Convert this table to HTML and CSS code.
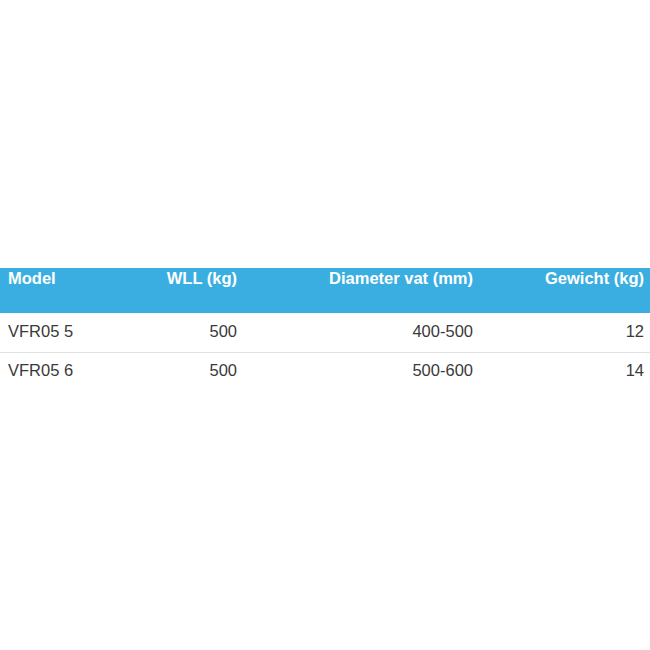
FILE: index.html
```html
<!DOCTYPE html>
<html>
<head>
<meta charset="utf-8">
<link rel="stylesheet" href="styles.css">
</head>
<body>
<table class="specs">
  <colgroup>
    <col class="c1"><col class="c2"><col class="c3"><col class="c4">
  </colgroup>
  <thead>
    <tr>
      <th class="left">Model</th>
      <th>WLL (kg)</th>
      <th>Diameter vat (mm)</th>
      <th class="last">Gewicht (kg)</th>
    </tr>
  </thead>
  <tbody>
    <tr>
      <td class="left">VFR05 5</td>
      <td>500</td>
      <td>400-500</td>
      <td class="last">12</td>
    </tr>
    <tr>
      <td class="left">VFR05 6</td>
      <td>500</td>
      <td>500-600</td>
      <td class="last">14</td>
    </tr>
  </tbody>
</table>
</body>
</html>
```
FILE: styles.css
```css
html, body {
  margin: 0;
  padding: 0;
  background: #ffffff;
}
body {
  font-family: "Liberation Sans", Arial, sans-serif;
  color: #3a3a3a;
}
.specs {
  margin-top: 268px;
  width: 650px;
  border-collapse: collapse;
  table-layout: fixed;
}
.c1 { width: 120px; }
.c2 { width: 120px; }
.c3 { width: 236px; }
.c4 { width: 174px; }
.specs th {
  background: #3aaee0;
  color: #ffffff;
  font-weight: bold;
  font-size: 16.5px;
  height: 45px;
  box-sizing: border-box;
  padding: 0 3px 0 8px;
  vertical-align: top;
  text-align: right;
  line-height: 20px;
}
.specs td {
  font-size: 16.5px;
  text-align: right;
  padding: 0 3px 3px 8px;
  height: 39px;
  box-sizing: border-box;
  line-height: 20px;
  vertical-align: middle;
}
.specs tbody tr + tr td {
  border-top: 1px solid #e2e2e2;
}
.specs .left { text-align: left; }
.specs .last { padding-right: 6px; }
```
